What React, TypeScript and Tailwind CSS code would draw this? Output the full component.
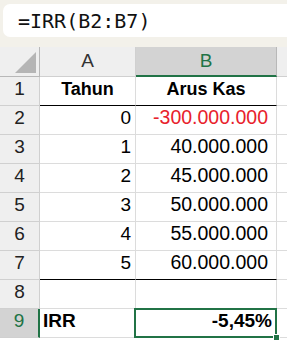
import React from 'react';

const rows: { n: number; a: string; b: string; kind?: 'head' | 'neg' | 'irr' }[] = [
  { n: 1, a: 'Tahun', b: 'Arus Kas', kind: 'head' },
  { n: 2, a: '0', b: '-300.000.000', kind: 'neg' },
  { n: 3, a: '1', b: '40.000.000' },
  { n: 4, a: '2', b: '45.000.000' },
  { n: 5, a: '3', b: '50.000.000' },
  { n: 6, a: '4', b: '55.000.000' },
  { n: 7, a: '5', b: '60.000.000' },
  { n: 8, a: '', b: '' },
  { n: 9, a: 'IRR', b: '-5,45%', kind: 'irr' },
];

export default function App() {
  return (
    <div className="w-[287px] h-[346px] overflow-hidden bg-white" style={{ fontFamily: '"Liberation Sans", Arial, sans-serif' }}>
      {/* Formula bar */}
      <div className="h-[47px] bg-[#f3f1ea] pt-[4px] pl-[3px]">
        <div
          className="h-[33px] bg-white rounded-l-[7px] flex items-center pl-[15px] text-[20px] text-[#111]"
          style={{ fontFamily: '"DejaVu Sans Mono", monospace' }}
        >
          =IRR(B2:B7)
        </div>
      </div>

      {/* Grid */}
      <div className="grid grid-cols-[40px_96px_141px_1fr]">
        {/* Column headers */}
        <div className="h-[30px] bg-[#efefef] border-r border-b border-[#b8b8b8] relative">
          <svg className="absolute left-[15px] top-[5px]" width="22" height="22" viewBox="0 0 22 22">
            <polygon points="21,0 21,21 0,21" fill="#b5b5b5" />
          </svg>
        </div>
        <div className="h-[30px] bg-[#efefef] border-r border-b border-[#d0d0d0] flex items-center justify-center text-[19px] text-[#333]">
          A
        </div>
        <div className="h-[30px] bg-[#d3d3d3] border-r border-[#b8b8b8] border-b-2 border-b-[#217346] flex items-center justify-center text-[19px] text-[#217346]">
          B
        </div>
        <div className="h-[30px] bg-[#efefef] border-b border-[#d0d0d0]" />

        {rows.map((r) => {
          const blackBottom = r.n === 1 || r.n === 7;
          const sel = r.n === 9;
          return (
            <React.Fragment key={r.n}>
              <div
                className={
                  sel
                    ? 'h-[29px] bg-[#d3d3d3] border-b border-[#d0d0d0] border-r-2 border-r-[#217346] flex items-end justify-center pb-[2px] text-[19px] text-[#217346]'
                    : 'h-[29px] bg-[#efefef] border-b border-r border-[#d0d0d0] flex items-end justify-center pb-[2px] text-[19px] text-[#222]'
                }
              >
                {r.n}
              </div>
              <div
                className={
                  'h-[29px] border-r border-[#dcdcdc] flex items-end pb-[2px] text-black ' +
                  (blackBottom ? 'border-b border-b-black ' : 'border-b ') +
                  (r.kind === 'head'
                    ? 'justify-center font-bold text-[18px]'
                    : r.kind === 'irr'
                      ? 'justify-start pl-[3px] font-bold text-[19px]'
                      : 'justify-end pr-[4px] text-[19px]')
                }
              >
                {r.a}
              </div>
              <div
                className={
                  'relative h-[29px] border-r border-[#dcdcdc] flex items-end pb-[2px] ' +
                  (blackBottom ? 'border-b border-b-black ' : 'border-b ') +
                  (r.kind === 'head'
                    ? 'justify-center font-bold text-black text-[18px]'
                    : r.kind === 'neg'
                      ? 'justify-end pr-[8px] text-[#e8212b] text-[19.5px]'
                      : r.kind === 'irr'
                        ? 'justify-end pr-[4px] font-bold text-black text-[19px]'
                        : 'justify-end pr-[8px] text-black text-[19.5px]')
                }
              >
                {r.b}
                {sel && (
                  <>
                    <div className="absolute -left-[2px] -top-[1px] -right-[1px] -bottom-[1px] border-2 border-[#217346] pointer-events-none" />
                    <div className="absolute -right-[4px] -bottom-[4px] w-[7px] h-[7px] bg-[#217346] border border-white" />
                  </>
                )}
              </div>
              <div className="h-[29px] border-b border-[#dcdcdc]" />
            </React.Fragment>
          );
        })}
      </div>
    </div>
  );
}
